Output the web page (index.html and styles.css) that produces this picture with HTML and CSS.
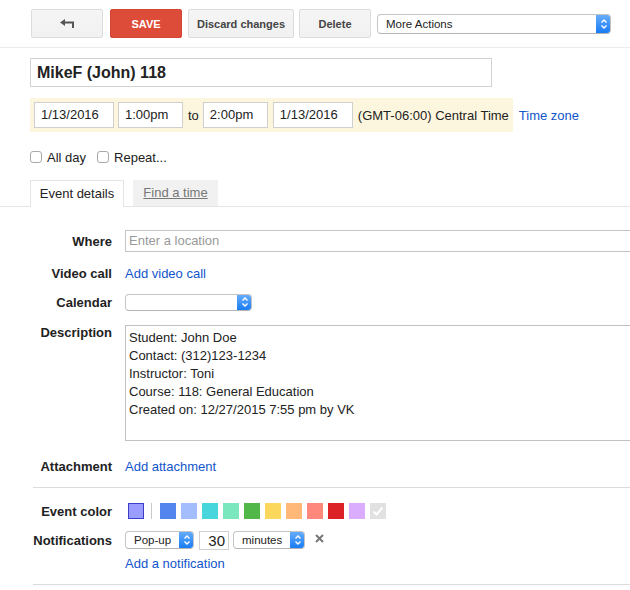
FILE: index.html
```html
<!DOCTYPE html>
<html>
<head>
<meta charset="utf-8">
<link rel="stylesheet" href="styles.css">
</head>
<body>
<div class="toolbar">
  <button class="btn btn-back"><svg width="15" height="9" viewBox="0 0 15 9"><path d="M0 3.5 L5 0 V2.5 H14 V9 H12 V4.5 H5 V7 Z" fill="#555"/></svg></button>
  <button class="btn btn-save">SAVE</button>
  <button class="btn btn-discard">Discard changes</button>
  <button class="btn btn-delete">Delete</button>
  <div class="sel sel-more"><span class="sel-text">More Actions</span><span class="sel-arrow"><svg width="8" height="12" viewBox="0 0 8 12"><path d="M1.5 4.5 L4 2 L6.5 4.5 M1.5 7.5 L4 10 L6.5 7.5" stroke="#fff" stroke-width="1.4" fill="none"/></svg></span></div>
</div>

<div class="pad">
  <div class="title-input">MikeF (John) 118</div>
  <div class="when">
    <div class="when-box">
      <div class="fld fld-date">1/13/2016</div>
      <div class="fld fld-time">1:00pm</div>
      <span class="to">to</span>
      <div class="fld fld-time">2:00pm</div>
      <div class="fld fld-date fld-date2">1/13/2016</div>
      <span class="tz">(GMT-06:00) Central Time</span>
    </div>
    <a class="link tz-link">Time zone</a>
  </div>
  <div class="checks">
    <span class="cb"></span><span class="cb-label">All day</span>
    <span class="cb cb2"></span><span class="cb-label">Repeat...</span>
  </div>
</div>

<div class="tabs">
  <div class="tab tab-active">Event details</div>
  <div class="tab tab-other">Find a time</div>
</div>

<div class="form">
  <div class="row row-where">
    <div class="lbl">Where</div>
    <div class="where-input">Enter a location</div>
  </div>
  <div class="row row-video">
    <div class="lbl">Video call</div>
    <a class="link">Add video call</a>
  </div>
  <div class="row row-cal">
    <div class="lbl">Calendar</div>
    <div class="sel sel-cal"><span class="sel-text"></span><span class="sel-arrow"><svg width="8" height="12" viewBox="0 0 8 12"><path d="M1.5 4.5 L4 2 L6.5 4.5 M1.5 7.5 L4 10 L6.5 7.5" stroke="#fff" stroke-width="1.4" fill="none"/></svg></span></div>
  </div>
  <div class="row row-desc">
    <div class="lbl lbl-top">Description</div>
    <div class="desc">Student: John Doe<br>Contact: (312)123-1234<br>Instructor: Toni<br>Course: 118: General Education<br>Created on: 12/27/2015 7:55 pm by VK</div>
  </div>
  <div class="row row-attach">
    <div class="lbl">Attachment</div>
    <a class="link">Add attachment</a>
  </div>
  <div class="sep"></div>
  <div class="row row-color">
    <div class="lbl">Event color</div>
    <div class="swatches">
      <span class="sw sw-sel"></span>
      <span class="sw-div"></span>
      <span class="sw c1"></span>
      <span class="sw c2"></span>
      <span class="sw c3"></span>
      <span class="sw c4"></span>
      <span class="sw c5"></span>
      <span class="sw c6"></span>
      <span class="sw c7"></span>
      <span class="sw c8"></span>
      <span class="sw c9"></span>
      <span class="sw c10"></span>
      <span class="sw c11"><svg width="16" height="16" viewBox="0 0 16 16"><path d="M3.5 8.5 L6.5 11.5 L12.5 4.5" stroke="#fff" stroke-width="2" fill="none"/></svg></span>
    </div>
  </div>
  <div class="row row-notif">
    <div class="lbl">Notifications</div>
    <div class="notif">
      <div class="sel sel-popup"><span class="sel-text">Pop-up</span><span class="sel-arrow"><svg width="8" height="12" viewBox="0 0 8 12"><path d="M1.5 4.5 L4 2 L6.5 4.5 M1.5 7.5 L4 10 L6.5 7.5" stroke="#fff" stroke-width="1.4" fill="none"/></svg></span></div>
      <div class="num">30</div>
      <div class="sel sel-min"><span class="sel-text">minutes</span><span class="sel-arrow"><svg width="8" height="12" viewBox="0 0 8 12"><path d="M1.5 4.5 L4 2 L6.5 4.5 M1.5 7.5 L4 10 L6.5 7.5" stroke="#fff" stroke-width="1.4" fill="none"/></svg></span></div>
      <svg class="xicon" width="9" height="9" viewBox="0 0 9 9"><path d="M1 1 L8 8 M8 1 L1 8" stroke="#777" stroke-width="2"/></svg>
    </div>
  </div>
  <div class="row row-addn">
    <div class="lbl"></div>
    <a class="link">Add a notification</a>
  </div>
  <div class="sep sep2"></div>
</div>
</body>
</html>
```

FILE: styles.css
```css
html, body {
  margin: 0;
  padding: 0;
  overflow: hidden;
  background: #fff;
}
body {
  width: 630px;
  font-family: "Liberation Sans", Arial, sans-serif;
  font-size: 13px;
  color: #222;
}
.link {
  color: #1155cc;
  cursor: pointer;
}

/* toolbar */
.toolbar {
  display: flex;
  align-items: center;
  padding: 9px 0 9px 31px;
  border-bottom: 1px solid #ebebeb;
}
.btn {
  height: 29px;
  box-sizing: border-box;
  border: 1px solid #dcdcdc;
  border-radius: 2px;
  background: linear-gradient(#f5f5f5, #f1f1f1);
  font-family: "Liberation Sans", Arial, sans-serif;
  font-size: 11px;
  font-weight: bold;
  color: #444;
  padding: 0;
  display: flex;
  align-items: center;
  justify-content: center;
}
.btn-back { width: 72px; margin-right: 7px; }
.btn-save {
  width: 72px;
  margin-right: 6px;
  background: #dd4b39;
  border-color: #d14836;
  color: #fff;
}
.btn-discard { width: 106px; margin-right: 5px; }
.btn-delete { width: 72px; margin-right: 6px; }

/* mac-like select */
.sel {
  display: flex;
  box-sizing: border-box;
  border: 1px solid #c4c4c4;
  border-bottom-color: #b4b4b4;
  border-radius: 4px;
  background: #fff;
  overflow: hidden;
}
.sel-text {
  flex: 1;
  padding-left: 8px;
  color: #222;
  font-size: 11.5px;
  display: flex;
  align-items: center;
}
.sel-arrow {
  width: 15px;
  background: linear-gradient(#6aaffb, #1479f3);
  display: flex;
  align-items: center;
  justify-content: center;
  margin: -1px -1px -1px 0;
}
.sel-more { width: 234px; height: 20px; }

/* top section */
.pad { padding-left: 30px; }
.title-input {
  margin-top: 10px;
  width: 462px;
  height: 29px;
  box-sizing: border-box;
  border: 1px solid #d3d3d3;
  font-size: 16px;
  font-weight: bold;
  line-height: 27px;
  padding-left: 6px;
}
.when {
  display: flex;
  align-items: center;
  margin-top: 11px;
}
.when-box {
  display: flex;
  align-items: center;
  background: #fdf6de;
  padding: 4px;
  height: 34px;
  box-sizing: border-box;
}
.fld {
  height: 26px;
  box-sizing: border-box;
  border: 1px solid #cfcfcf;
  background: #fff;
  line-height: 24px;
  padding-left: 6px;
  margin-right: 4px;
}
.fld-date { width: 80px; }
.fld-time { width: 65px; }
.fld-date2 { margin-left: 1px; }
.to { margin: 0 4px 0 1px; }
.tz { margin-left: 1px; }
.tz-link { margin-left: 6px; }

.checks {
  display: flex;
  align-items: center;
  height: 18px;
  margin-top: 16px;
}
.cb {
  width: 12px;
  height: 12px;
  box-sizing: border-box;
  border: 1px solid #a9a9a9;
  border-radius: 3px;
  background: #fff;
  margin-right: 5px;
}
.cb2 { margin-left: 11px; }

/* tabs */
.tabs {
  display: flex;
  align-items: flex-end;
  padding-left: 30px;
  margin-top: 14px;
  height: 26px;
  border-bottom: 1px solid #e5e5e5;
}
.tab {
  box-sizing: border-box;
  text-align: center;
}
.tab-active {
  width: 94px;
  height: 27px;
  border: 1px solid #e5e5e5;
  border-bottom: none;
  background: #fff;
  margin-bottom: -1px;
  line-height: 26px;
  color: #222;
}
.tab-other {
  width: 85px;
  height: 26px;
  margin-left: 9px;
  background: #f1f1f1;
  color: #777;
  text-decoration: underline;
  line-height: 26px;
}

/* form */
.form {
  width: 720px;
  margin-top: 23px;
}
.row {
  display: grid;
  grid-template-columns: 112px 1fr;
  column-gap: 13px;
  align-items: center;
  min-height: 22px;
}
.lbl {
  text-align: right;
  font-weight: bold;
  color: #222;
}
.lbl-top {
  align-self: start;
  line-height: 15px;
}
.where-input {
  height: 22px;
  box-sizing: border-box;
  border: 1px solid #c4c4c4;
  color: #999;
  line-height: 20px;
  padding-left: 3px;
}
.row-video { margin-top: 10px; }
.row-cal { margin-top: 7px; }
.sel-cal { width: 127px; height: 17px; }
.row-desc { margin-top: 12px; align-items: start; }
.desc {
  height: 116px;
  box-sizing: border-box;
  border: 1px solid #c2c2c2;
  padding: 3px 3px 2px;
  line-height: 18px;
}
.row-attach { margin-top: 14px; }
.sep {
  margin: 10px 0 0 33px;
  height: 1px;
  background: #dcdcdc;
}
.row-color { margin-top: 12px; }
.swatches {
  display: flex;
  align-items: center;
  padding-left: 3px;
}
.sw {
  width: 16px;
  height: 16px;
  box-sizing: border-box;
  margin-right: 5px;
  display: block;
}
.sw svg { display: block; }
.sw-sel {
  background: #9a9cff;
  border: 1px solid #3d3dcc;
  margin-right: 7px;
}
.sw-div {
  width: 1px;
  height: 16px;
  background: #c8c8c8;
  margin-right: 8px;
}
.c1 { background: #5484ed; }
.c2 { background: #a4bdfc; }
.c3 { background: #46d6db; }
.c4 { background: #7ae7bf; }
.c5 { background: #51b749; }
.c6 { background: #fbd75b; }
.c7 { background: #ffb878; }
.c8 { background: #ff887c; }
.c9 { background: #dc2127; }
.c10 { background: #dbadff; }
.c11 { background: #e1e1e1; }

.row-notif { margin-top: 7px; }
.notif {
  display: flex;
  align-items: center;
}
.sel-popup { width: 69px; height: 18px; }
.num {
  margin-left: 5px;
  width: 30px;
  height: 19px;
  box-sizing: border-box;
  border: 1px solid #d0d0d0;
  text-align: right;
  padding-right: 3px;
  line-height: 17px;
  font-size: 15px;
}
.sel-min { width: 72px; height: 18px; margin-left: 4px; }
.xicon { margin-left: 10px; margin-top: -4px; }
.row-addn { margin-top: 1px; }
.sep2 { margin-top: 10px; }
```
